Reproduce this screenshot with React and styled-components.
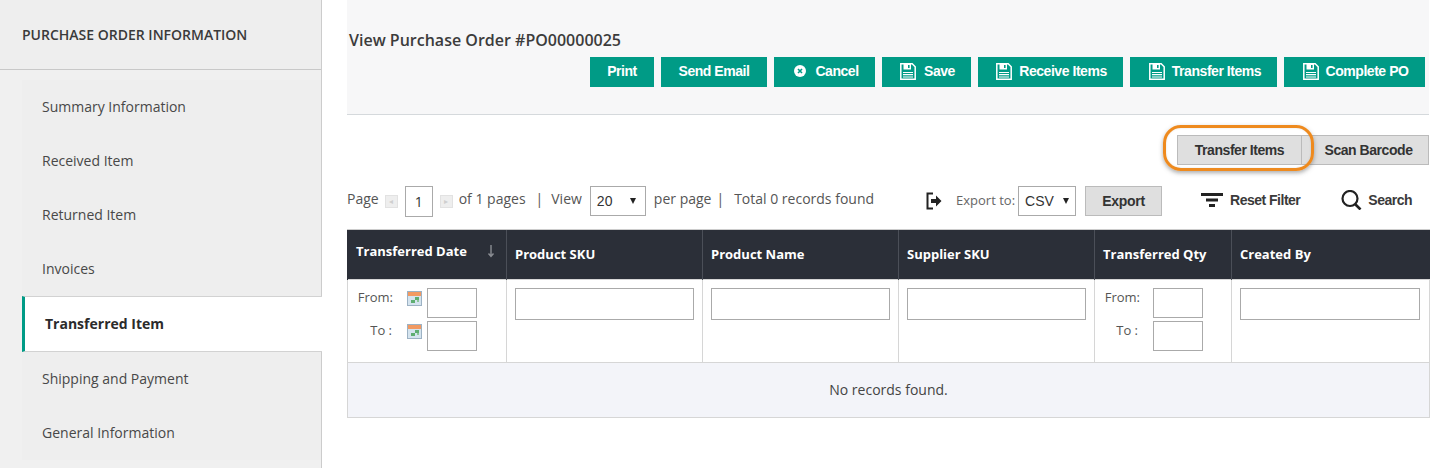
import React from "react";
import styled, { createGlobalStyle } from "styled-components";

const GlobalStyle = createGlobalStyle`
    html, body {
        margin: 0;
        padding: 0;
        background: #fff;
        overflow: hidden;
    }
    * { box-sizing: border-box; }
`;

const Page = styled.div`
    display: flex;
    width: 1451px;
    height: 468px;
    font-family: "Open Sans", sans-serif;
    color: #444;
    overflow: hidden;
`;

const Sidebar = styled.aside`
    width: 322px;
    flex: none;
    background: #f0f0f0;
    border-right: 1px solid #ccc;
`;

const SidebarTitle = styled.div`
    height: 70px;
    padding: 25px 0 0 22px;
    font-size: 14px;
    line-height: 19px;
    font-weight: 600;
    color: #3a3a3a;
    background: #eee;
    border-bottom: 1px solid #c8c8c8;
`;

const Nav = styled.nav`
    display: flex;
    flex-direction: column;
    margin: 10px 0 0 22px;
    background: #eee;
`;

const NavItem = styled.div`
    display: flex;
    align-items: center;
    height: ${props => props.$active ? "56px" : "54px"};
    padding: 0 0 2px 20px;
    font-size: 14px;
    font-weight: ${props => props.$active ? 700 : 400};
    color: ${props => props.$active ? "#2b2b2b" : "#484848"};
    background: ${props => props.$active ? "#fff" : "transparent"};
    border-left: ${props => props.$active ? "3px solid #009b86" : "0"};
    border-top: ${props => props.$active ? "1px solid #d2d2d2" : "0"};
    border-bottom: ${props => props.$active ? "1px solid #d2d2d2" : "0"};
    margin-right: ${props => props.$active ? "-1px" : "0"};
`;

const Main = styled.main`
    flex: none;
    width: 1082px;
    margin-left: 25px;
    position: relative;
`;

const Header = styled.header`
    height: 115px;
    padding: 30px 4px 0 2px;
    background: #f7f7f8;
    border-bottom: 1px solid #d5d9dc;
`;

const Title = styled.h1`
    margin: 0;
    font-size: 16px;
    line-height: 20px;
    font-weight: 600;
    color: #3c3c3c;
`;

const Actions = styled.div`
    display: flex;
    justify-content: flex-end;
    gap: 7px;
    margin-top: 7px;
`;

const ActionButton = styled.button`
    display: flex;
    align-items: center;
    justify-content: center;
    gap: ${props => props.$gap || 7}px;
    width: ${props => props.$w}px;
    height: 30px;
    padding: 0 0 2px ${props => props.$pl || 0}px;
    border: 0;
    background: #009b86;
    color: #fff;
    font-family: "Liberation Sans", Arial, sans-serif;
    font-size: 14px;
    letter-spacing: -0.45px;
    font-weight: 700;
`;

const Tabs = styled.div`
    display: flex;
    justify-content: flex-end;
    margin-top: 20px;
`;

const Tab = styled.button`
    width: ${props => props.$w}px;
    height: 30px;
    padding: 0 0 0 ${props => props.$pl || 0}px;
    background: #dfdfdf;
    border: 1px solid #bbb;
    border-left-width: ${props => props.$joined ? 0 : 1}px;
    color: #333;
    font-family: "Liberation Sans", Arial, sans-serif;
    font-size: 14px;
    letter-spacing: -0.45px;
    font-weight: 700;
`;

const Highlight = styled.div`
    position: absolute;
    left: 816px;
    top: 125px;
    width: 151px;
    height: 46px;
    border: 3px solid #ee8a1e;
    border-radius: 18px;
    box-shadow: 0 2px 4px rgba(90, 90, 90, 0.5), inset 0 0 2px rgba(90, 90, 90, 0.2);
    pointer-events: none;
`;

const Toolbar = styled.div`
    display: flex;
    align-items: center;
    height: 30px;
    margin-top: 21px;
    font-size: 14px;
    color: #555;
`;

const PagerText = styled.span`
    margin-left: ${props => props.$ml || 0}px;
    padding-bottom: 5px;
    white-space: nowrap;
`;

const PagerArrow = styled.span`
    width: 13px;
    height: 13px;
    margin-left: ${props => props.$ml}px;
    background: #eee;
    border: 1px solid #e2e2e2;
    display: flex;
    align-items: center;
    justify-content: center;
    color: #cfcfcf;
    font-size: 8px;
    line-height: 1;
`;

const PageInput = styled.div`
    width: 28px;
    height: 31px;
    margin-left: 7px;
    border: 1px solid #aaa;
    display: flex;
    align-items: center;
    justify-content: center;
    font-size: 14px;
    color: #333;
`;

const FakeSelect = styled.div`
    display: flex;
    align-items: center;
    justify-content: space-between;
    width: ${props => props.$w}px;
    height: 30px;
    margin-left: ${props => props.$ml || 0}px;
    padding: 0 ${props => props.$pr}px 0 6px;
    border: 1px solid #aaa;
    background: #fff;
    color: #333;
    font-family: "Liberation Sans", Arial, sans-serif;
    font-size: 14px;

    &::after {
        content: "";
        border-left: 3.5px solid transparent;
        border-right: 3.5px solid transparent;
        border-top: 6px solid #222;
    }
`;

const ExportLabel = styled.span`
    margin-left: 14px;
    padding-bottom: 2px;
    font-size: 13px;
    color: #666;
`;

const ExportButton = styled.button`
    width: 77px;
    height: 30px;
    margin-left: 9px;
    padding: 0;
    background: #dfdfdf;
    border: 1px solid #bbb;
    color: #333;
    font-family: "Liberation Sans", Arial, sans-serif;
    font-size: 14px;
    letter-spacing: -0.3px;
    font-weight: 700;
`;

const ToolLink = styled.span`
    display: flex;
    align-items: center;
    gap: ${props => props.$gap}px;
    margin-left: ${props => props.$ml}px;
    padding-bottom: 2px;
    font-family: "Liberation Sans", Arial, sans-serif;
    font-size: 14px;
    letter-spacing: -0.5px;
    font-weight: 700;
    color: #3a3a3a;
    white-space: nowrap;
`;

const ExportIcon = styled.svg`
    margin-left: 52px;
    flex: none;
`;

const Table = styled.table`
    width: 1082px;
    margin-top: 13px;
    border-collapse: collapse;
    table-layout: fixed;
`;

const HeadCell = styled.th`
    height: 50px;
    padding: ${props => props.$raised ? "0 8px 8px" : "0 8px 2px"};
    background: #2b2f38;
    border-top: 1px solid #ccc;
    border-left: 1px solid #4b4f58;
    color: #fff;
    font-size: 13px;
    font-weight: 700;
    text-align: left;
    position: relative;

    &:first-child { border-left-color: #2b2f38; }
`;

const SortArrow = styled.svg`
    position: absolute;
    right: 11px;
    top: 14px;
`;

const FilterCell = styled.td`
    height: 83px;
    padding: 8px 8px 0;
    vertical-align: top;
    border: 1px solid #d6d6d6;
    background: #fff;
`;

const TextFilter = styled.div`
    width: ${props => props.$w}px;
    height: 32px;
    border: 1px solid #aaa;
    background: #fff;
`;

const RangeRow = styled.div`
    display: grid;
    grid-template-columns: ${props => props.$cols};
    height: 30px;
    margin-bottom: 3px;
    font-size: 13px;
    color: #555;
`;

const RangeLabel = styled.span`
    text-align: right;
    line-height: 18px;
    padding-right: ${props => props.$pr || 0}px;
    white-space: nowrap;
`;

const CalendarWrap = styled.span`
    display: block;
    padding: 3px 0 0 14px;
`;

const RangeInput = styled.div`
    width: 50px;
    height: 30px;
    border: 1px solid #aaa;
    background: #fff;
`;

const EmptyCell = styled.td`
    height: 55px;
    padding-bottom: 2px;
    text-align: center;
    font-size: 14px;
    color: #444;
    background: #f3f4f9;
    border: 1px solid #d6d6d6;
`;

const SaveIcon = () => (
    <svg width="16" height="17" viewBox="0 0 16 17" fill="none">
        <path d="M.8.8h11.4l3 3v12.4H.8z" stroke="#fff" strokeWidth="1.5" />
        <path d="M3.5 1h7.5v5.5H3.5z" fill="#fff" />
        <path d="M8 2h1.6v3H8z" fill="#009b86" />
        <path d="M3 9.5h10M3 11.7h10M3 14h10" stroke="#fff" strokeWidth="1.2" />
    </svg>
);

const CancelIcon = () => (
    <svg width="12" height="12" viewBox="0 0 12 12">
        <circle cx="6" cy="6" r="6" fill="#fff" />
        <path d="M4 4l4 4M8 4l-4 4" stroke="#009b86" strokeWidth="1.6" />
    </svg>
);

const CalendarIcon = () => (
    <svg width="15" height="15" viewBox="0 0 15 15">
        <rect x="0.5" y="0.5" width="14" height="14" fill="#d5e4ef" stroke="#9db2c4" />
        <rect x="1" y="1" width="13" height="4" fill="#f29a62" />
        <rect x="8" y="6" width="4" height="3" fill="#5fae72" />
        <rect x="4" y="9" width="4" height="3" fill="#5fae72" />
        <rect x="10" y="9" width="2" height="2" fill="#8cc69a" />
    </svg>
);

const FilterIcon = () => (
    <svg width="22" height="14" viewBox="0 0 22 14">
        <path d="M0 1.5h22M5 7h12M8 12.5h6" stroke="#222" strokeWidth="2.8" />
    </svg>
);

const SearchIcon = () => (
    <svg width="21" height="20" viewBox="0 0 21 20" fill="none">
        <circle cx="9" cy="8.5" r="7.5" stroke="#222" strokeWidth="2.2" />
        <path d="M14 14l5.5 5.5" stroke="#222" strokeWidth="2.6" />
    </svg>
);

const RangeFilter = ({ cols, calendar, toPad }) => (
    <>
        <RangeRow $cols={cols}>
            <RangeLabel>From:</RangeLabel>
            <CalendarWrap>{calendar && <CalendarIcon />}</CalendarWrap>
            <RangeInput />
        </RangeRow>
        <RangeRow $cols={cols}>
            <RangeLabel $pr={toPad}>To :</RangeLabel>
            <CalendarWrap>{calendar && <CalendarIcon />}</CalendarWrap>
            <RangeInput />
        </RangeRow>
    </>
);

const navItems = [
    "Summary Information",
    "Received Item",
    "Returned Item",
    "Invoices",
    "Transferred Item",
    "Shipping and Payment",
    "General Information",
];

const columns = [159, 196, 196, 196, 137, 198];

export default function App() {
    return (
        <Page>
            <GlobalStyle />
            <Sidebar>
                <SidebarTitle>PURCHASE ORDER INFORMATION</SidebarTitle>
                <Nav>
                    {navItems.map(item => (
                        <NavItem key={item} $active={item === "Transferred Item"}>{item}</NavItem>
                    ))}
                </Nav>
            </Sidebar>
            <Main>
                <Header>
                    <Title>View Purchase Order #PO00000025</Title>
                    <Actions>
                        <ActionButton $w={64}>Print</ActionButton>
                        <ActionButton $w={106}>Send Email</ActionButton>
                        <ActionButton $w={101} $gap={9} $pl={4}><CancelIcon />Cancel</ActionButton>
                        <ActionButton $w={89} $gap={8} $pl={2}><SaveIcon />Save</ActionButton>
                        <ActionButton $w={145} $pl={2}><SaveIcon />Receive Items</ActionButton>
                        <ActionButton $w={147} $pl={3}><SaveIcon />Transfer Items</ActionButton>
                        <ActionButton $w={141} $pl={2}><SaveIcon />Complete PO</ActionButton>
                    </Actions>
                </Header>
                <Tabs>
                    <Tab $w={125}>Transfer Items</Tab>
                    <Tab $w={127} $joined $pl={7}>Scan Barcode</Tab>
                </Tabs>
                <Highlight />
                <Toolbar>
                    <PagerText>Page</PagerText>
                    <PagerArrow $ml={6}>◂</PagerArrow>
                    <PageInput>1</PageInput>
                    <PagerArrow $ml={7}>▸</PagerArrow>
                    <PagerText $ml={6}>of 1 pages</PagerText>
                    <PagerText $ml={10}>|</PagerText>
                    <PagerText $ml={8}>View</PagerText>
                    <FakeSelect $w={56} $ml={8} $pr={9}>20</FakeSelect>
                    <PagerText $ml={8}>per page</PagerText>
                    <PagerText $ml={5}>|</PagerText>
                    <PagerText $ml={10}>Total 0 records found</PagerText>
                    <ExportIcon width="16" height="18" viewBox="0 0 16 18" fill="none">
                        <path d="M7 1.5H1.5v15H7" stroke="#222" strokeWidth="2" />
                        <path d="M5 7h5V3.5L15.5 9 10 14.5V11H5z" fill="#222" />
                    </ExportIcon>
                    <ExportLabel>Export to:</ExportLabel>
                    <FakeSelect $w={58} $ml={3} $pr={6}>CSV</FakeSelect>
                    <ExportButton>Export</ExportButton>
                    <ToolLink $ml={39} $gap={7}><FilterIcon />Reset Filter</ToolLink>
                    <ToolLink $ml={41} $gap={6}><SearchIcon />Search</ToolLink>
                </Toolbar>
                <Table>
                    <colgroup>
                        {columns.map((w, i) => <col key={i} style={{ width: w }} />)}
                    </colgroup>
                    <thead>
                        <tr>
                            <HeadCell $raised>
                                Transferred Date
                                <SortArrow width="8" height="14" viewBox="0 0 8 14" fill="none">
                                    <path d="M4 1v11M1.5 9.5L4 12.5l2.5-3" stroke="#8a8d93" strokeWidth="1.4" />
                                </SortArrow>
                            </HeadCell>
                            <HeadCell>Product SKU</HeadCell>
                            <HeadCell>Product Name</HeadCell>
                            <HeadCell>Supplier SKU</HeadCell>
                            <HeadCell>Transferred Qty</HeadCell>
                            <HeadCell>Created By</HeadCell>
                        </tr>
                    </thead>
                    <tbody>
                        <tr>
                            <FilterCell><RangeFilter cols="37px 34px 50px" calendar toPad={1} /></FilterCell>
                            <FilterCell><TextFilter $w={179} /></FilterCell>
                            <FilterCell><TextFilter $w={179} /></FilterCell>
                            <FilterCell><TextFilter $w={179} /></FilterCell>
                            <FilterCell><RangeFilter cols="37px 13px 50px" toPad={2} /></FilterCell>
                            <FilterCell><TextFilter $w={180} /></FilterCell>
                        </tr>
                        <tr>
                            <EmptyCell colSpan={6}>No records found.</EmptyCell>
                        </tr>
                    </tbody>
                </Table>
            </Main>
        </Page>
    );
}
